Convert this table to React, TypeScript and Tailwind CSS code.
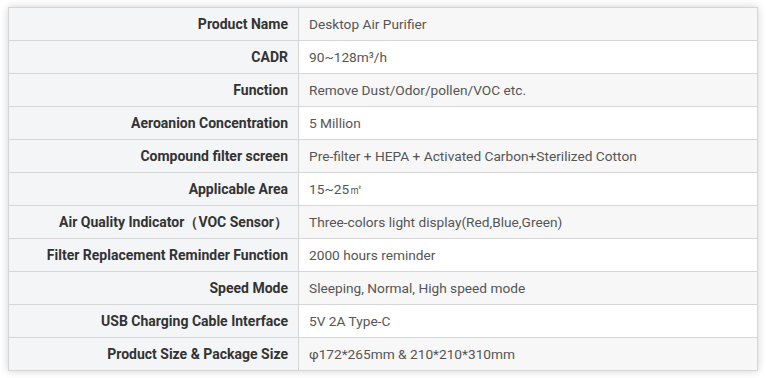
const specs: [string, string][] = [
  ["Product Name", "Desktop Air Purifier"],
  ["CADR", "90~128m³/h"],
  ["Function", "Remove Dust/Odor/pollen/VOC etc."],
  ["Aeroanion Concentration", "5 Million"],
  ["Compound filter screen", "Pre-filter + HEPA + Activated Carbon+Sterilized Cotton"],
  ["Applicable Area", "15~25㎡"],
  ["Air Quality Indicator（VOC Sensor）", "Three-colors light display(Red,Blue,Green)"],
  ["Filter Replacement Reminder Function", "2000 hours reminder"],
  ["Speed Mode", "Sleeping, Normal, High speed mode"],
  ["USB Charging Cable Interface", "5V 2A Type-C"],
  ["Product Size & Package Size", "φ172*265mm & 210*210*310mm"],
]

export default function App() {
  return (
    <div className="w-[766px] h-[378px] bg-white pt-[7px] pl-[8px] font-['Roboto',sans-serif]">
      <table className="w-[750px] border-collapse shadow-[0_0_8px_rgba(0,0,0,0.18)]">
        <tbody>
          {specs.map(([label, value], i) => (
            <tr key={label} className="h-[33px]">
              <th className="w-[290px] border border-[#d6d6d6] bg-[#f4f5f7] pr-[10px] text-right text-[14px] font-bold text-[#333]">
                {label}
              </th>
              <td
                className={
                  "border border-[#d6d6d6] pl-[10px] text-left text-[13.7px] text-[#555] " +
                  (i % 2 === 0 ? "bg-[#f7f7f8]" : "bg-white")
                }
              >
                {value}
              </td>
            </tr>
          ))}
        </tbody>
      </table>
    </div>
  )
}
